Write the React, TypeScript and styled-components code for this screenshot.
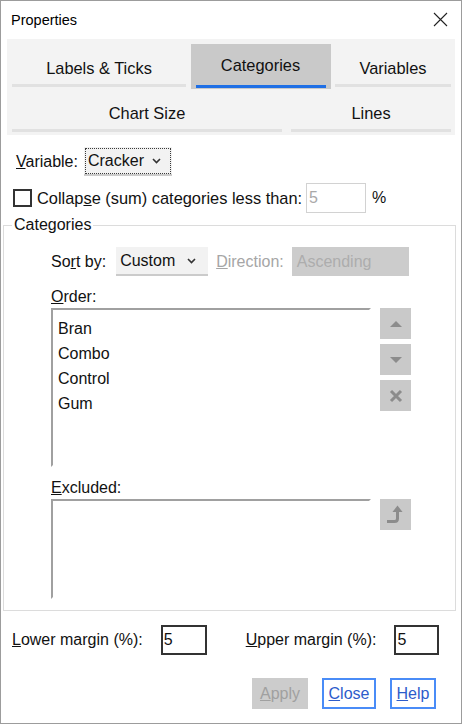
import React from "react";
import styled, { createGlobalStyle } from "styled-components";

const GlobalStyle = createGlobalStyle`
  html, body {
    margin: 0;
    padding: 0;
    background: #fff;
  }
  body {
    font-family: "Liberation Sans", Arial, sans-serif;
    font-size: 16px;
    color: #111;
  }
  * {
    box-sizing: border-box;
  }
`;

const Window = styled.div`
  width: 462px;
  height: 724px;
  border: 1px solid #9c9c9c;
  background: #fff;
  display: flex;
  flex-direction: column;
  overflow: hidden;
`;

const TitleBar = styled.div`
  height: 37px;
  display: flex;
  align-items: center;
  justify-content: space-between;
  padding: 0 13px 0 10px;
  font-size: 14.5px;
  color: #000;
`;

const TabArea = styled.div`
  margin: 1px 6px 0;
  background: #f3f3f3;
  padding: 5px 4px 1px 5px;
`;

const TabRow = styled.div`
  display: flex;
  justify-content: space-between;
  height: 45px;
`;

const Tab = styled.div<{ $w: number; $active?: boolean }>`
  width: ${(p) => p.$w}px;
  display: flex;
  flex-direction: column;
  background: ${(p) => (p.$active ? "#c9c9c9" : "transparent")};
  color: #111;
  font-size: 16.4px;
`;

const TabLabel = styled.div<{ $active?: boolean }>`
  flex: 1;
  display: flex;
  align-items: center;
  justify-content: center;
  padding-top: ${(p) => (p.$active ? 2 : 8)}px;
`;

const TabBar = styled.div<{ $active?: boolean }>`
  height: 3px;
  background: ${(p) => (p.$active ? "#1f6fe5" : "#e1e1e1")};
  margin: ${(p) => (p.$active ? "0 5px 1px" : "0 0 2px")};
`;

const Body = styled.div`
  display: flex;
  flex-direction: column;
  padding: 12px 5px 0 2px;
`;

const VariableRow = styled.div`
  display: flex;
  align-items: center;
  height: 29px;
  padding-left: 13px;
  gap: 6px;
`;

const Select = styled.div<{ $w: number }>`
  width: ${(p) => p.$w}px;
  height: 29px;
  display: flex;
  background: #f2f2f2;
  border-bottom: 2px solid #cbcbcb;
  padding: 1px 1px 0;
`;

const SelectFace = styled.div<{ $focus?: boolean; $pr: number }>`
  flex: 1;
  display: flex;
  align-items: center;
  justify-content: space-between;
  padding: 0 ${(p) => p.$pr}px 0 2px;
  border: 1px dotted ${(p) => (p.$focus ? "#3a3a3a" : "transparent")};
`;

const CollapseRow = styled.div`
  display: flex;
  align-items: center;
  height: 30px;
  margin-top: 7px;
  padding-left: 10px;
`;

const Checkbox = styled.div`
  width: 19px;
  height: 18px;
  border: 2px solid #333;
  background: #fff;
  margin-right: 5px;
`;

const CollapseText = styled.span`
  font-size: 16.4px;
`;

const NumberBox = styled.div<{ $w: number; $dim?: boolean }>`
  width: ${(p) => p.$w}px;
  height: 30px;
  display: flex;
  align-items: center;
  padding-left: ${(p) => (p.$dim ? 2 : 1)}px;
  border: ${(p) => (p.$dim ? "1px solid #d2d2d2" : "2px solid #333")};
  color: ${(p) => (p.$dim ? "#a9a9a9" : "#111")};
  background: #fff;
`;

const Spaced = styled.span<{ $ml: number }>`
  margin-left: ${(p) => p.$ml}px;
  display: inline-flex;
`;

const GroupBox = styled.fieldset`
  margin: 3px 0 0;
  padding: 0;
  min-width: 0;
  border: 1px solid #dcdcdc;
`;

const Legend = styled.legend`
  margin-left: 8px;
  padding: 0 2px;
  line-height: 18px;
`;

const GroupContent = styled.div`
  display: flex;
  flex-direction: column;
  padding: 13px 0 11px 47px;
`;

const SortRow = styled.div`
  display: flex;
  align-items: center;
  height: 29px;
`;

const Muted = styled.span`
  color: #a6a6a6;
`;

const DisabledBox = styled.div`
  width: 117px;
  height: 29px;
  display: flex;
  align-items: center;
  padding-left: 5px;
  background: #cccccc;
  color: #adadad;
`;

const FieldLabel = styled.div`
  line-height: 18px;
  margin: 12px 0 2px;
`;

const ListRow = styled.div`
  display: flex;
  align-items: flex-start;
  gap: 9px;
`;

const ListBox = styled.div<{ $h: number }>`
  width: 320px;
  height: ${(p) => p.$h}px;
  border-style: solid;
  border-width: 2px;
  border-color: #a0a0a0 #fff #fff #a0a0a0;
  padding: 6px 0 0 5px;
  line-height: 25px;
`;

const ButtonColumn = styled.div`
  display: flex;
  flex-direction: column;
  gap: 5px;
`;

const IconButton = styled.div`
  width: 31px;
  height: 31px;
  display: flex;
  align-items: center;
  justify-content: center;
  background: #c9c9c9;
`;

const MarginRow = styled.div`
  display: flex;
  align-items: center;
  height: 30px;
  margin-top: 14px;
  padding-left: 9px;
`;

const ButtonRow = styled.div`
  display: flex;
  justify-content: flex-end;
  gap: 14px;
  margin-top: 23px;
  padding-right: 20px;
`;

const DialogButton = styled.div<{ $w: number; $disabled?: boolean }>`
  width: ${(p) => p.$w}px;
  height: 31px;
  display: flex;
  align-items: center;
  justify-content: center;
  background: ${(p) => (p.$disabled ? "#cccccc" : "#fff")};
  border: 2px solid ${(p) => (p.$disabled ? "#cccccc" : "#4a8cf7")};
  color: ${(p) => (p.$disabled ? "#a0a0a0" : "#2d5ccb")};
`;

const Chevron = () => (
  <svg width="9" height="6" viewBox="0 0 9 6">
    <polyline points="1,1 4.5,4.5 8,1" fill="none" stroke="#333" strokeWidth="1.6" />
  </svg>
);

const CloseGlyph = () => (
  <svg width="15" height="15" viewBox="0 0 15 15">
    <path d="M1 1 L14 14 M14 1 L1 14" stroke="#222" strokeWidth="1.1" />
  </svg>
);

const iconColor = "#8c8c8c";

const UpIcon = () => (
  <svg width="14" height="8" viewBox="0 0 14 8">
    <polygon points="1,7 7,1 13,7" fill={iconColor} />
  </svg>
);

const DownIcon = () => (
  <svg width="14" height="8" viewBox="0 0 14 8">
    <polygon points="1,1 13,1 7,7" fill={iconColor} />
  </svg>
);

const RemoveIcon = () => (
  <svg width="14" height="14" viewBox="0 0 14 14">
    <path d="M2 2 L12 12 M12 2 L2 12" stroke={iconColor} strokeWidth="3" />
  </svg>
);

const RestoreIcon = () => (
  <svg width="31" height="31" viewBox="0 0 31 31">
    <path d="M7 22.5 H14.5 Q17.5 22.5 17.5 19.5 V12" fill="none" stroke={iconColor} strokeWidth="3" />
    <polygon points="12.5,13 17.5,6.5 22.5,13" fill={iconColor} />
  </svg>
);

const firstRow = [
  { label: "Labels & Ticks", w: 174 },
  { label: "Categories", w: 140, active: true },
  { label: "Variables", w: 116 },
];

const secondRow = [
  { label: "Chart Size", w: 270 },
  { label: "Lines", w: 160 },
];

const orderItems = ["Bran", "Combo", "Control", "Gum"];

function TabLine({ tabs }: { tabs: { label: string; w: number; active?: boolean }[] }) {
  return (
    <TabRow>
      {tabs.map((t) => (
        <Tab key={t.label} $w={t.w} $active={t.active}>
          <TabLabel $active={t.active}>{t.label}</TabLabel>
          <TabBar $active={t.active} />
        </Tab>
      ))}
    </TabRow>
  );
}

export default function App() {
  return (
    <>
      <GlobalStyle />
      <Window>
        <TitleBar>
          <span>Properties</span>
          <CloseGlyph />
        </TitleBar>

        <TabArea>
          <TabLine tabs={firstRow} />
          <TabLine tabs={secondRow} />
        </TabArea>

        <Body>
          <VariableRow>
            <span>
              <u>V</u>ariable:
            </span>
            <Select $w={88}>
              <SelectFace $focus $pr={9}>
                <span>Cracker</span>
                <Chevron />
              </SelectFace>
            </Select>
          </VariableRow>

          <CollapseRow>
            <Checkbox />
            <CollapseText>
              Collap<u>s</u>e (sum) categories less than:
            </CollapseText>
            <Spaced $ml={4}>
              <NumberBox $w={60} $dim>
                5
              </NumberBox>
            </Spaced>
            <Spaced $ml={6}>%</Spaced>
          </CollapseRow>

          <GroupBox>
            <Legend>Categories</Legend>
            <GroupContent>
              <SortRow>
                <span>
                  So<u>r</u>t by:
                </span>
                <Spaced $ml={10}>
                  <Select $w={92}>
                    <SelectFace $pr={10}>
                      <span>Custom</span>
                      <Chevron />
                    </SelectFace>
                  </Select>
                </Spaced>
                <Spaced $ml={8}>
                  <Muted>
                    <u>D</u>irection:
                  </Muted>
                </Spaced>
                <Spaced $ml={8}>
                  <DisabledBox>Ascending</DisabledBox>
                </Spaced>
              </SortRow>

              <FieldLabel>
                <u>O</u>rder:
              </FieldLabel>
              <ListRow>
                <ListBox $h={159}>
                  {orderItems.map((item) => (
                    <div key={item}>{item}</div>
                  ))}
                </ListBox>
                <ButtonColumn>
                  <IconButton>
                    <UpIcon />
                  </IconButton>
                  <IconButton>
                    <DownIcon />
                  </IconButton>
                  <IconButton>
                    <RemoveIcon />
                  </IconButton>
                </ButtonColumn>
              </ListRow>

              <FieldLabel>
                <u>E</u>xcluded:
              </FieldLabel>
              <ListRow>
                <ListBox $h={100} />
                <ButtonColumn>
                  <IconButton>
                    <RestoreIcon />
                  </IconButton>
                </ButtonColumn>
              </ListRow>
            </GroupContent>
          </GroupBox>

          <MarginRow>
            <span>
              <u>L</u>ower margin (%):
            </span>
            <Spaced $ml={18}>
              <NumberBox $w={46}>5</NumberBox>
            </Spaced>
            <Spaced $ml={39}>
              <span>
                <u>U</u>pper margin (%):
              </span>
            </Spaced>
            <Spaced $ml={18}>
              <NumberBox $w={45}>5</NumberBox>
            </Spaced>
          </MarginRow>

          <ButtonRow>
            <DialogButton $w={56} $disabled>
              <span>
                <u>A</u>pply
              </span>
            </DialogButton>
            <DialogButton $w={54}>
              <span>
                <u>C</u>lose
              </span>
            </DialogButton>
            <DialogButton $w={46}>
              <span>
                <u>H</u>elp
              </span>
            </DialogButton>
          </ButtonRow>
        </Body>
      </Window>
    </>
  );
}
